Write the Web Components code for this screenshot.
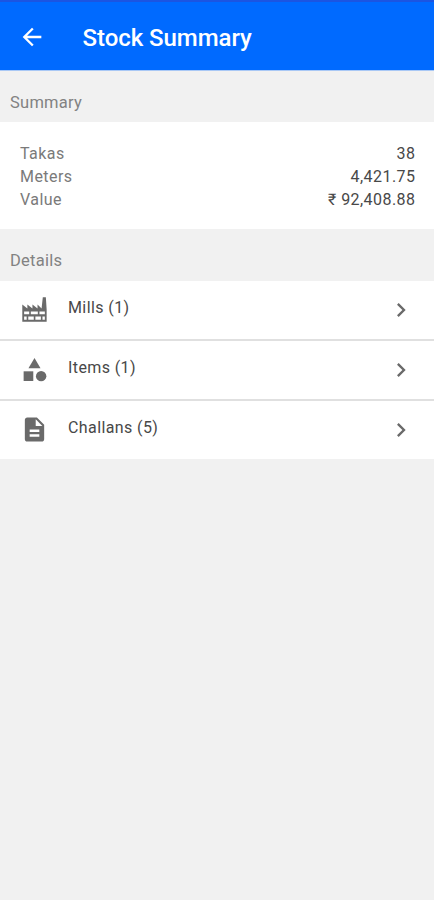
<!DOCTYPE html>
<html lang="en">
<head>
<meta charset="utf-8">
<meta name="viewport" content="width=device-width, initial-scale=1">
<title>Stock Summary</title>
<style>
  html, body {
    margin: 0;
    min-height: 100%;
    background: #f1f1f1;
  }

  body {
    font-family: Roboto, "Liberation Sans", sans-serif;
    font-size: 16px;
    color: #484848;
  }
</style>
</head>
<body>
<stock-page>
  <app-bar slot="header">Stock Summary</app-bar>
  <list-section label="Summary">
    <summary-card>
      <summary-line label="Takas">38</summary-line>
      <summary-line label="Meters">4,421.75</summary-line>
      <summary-line label="Value">₹ 92,408.88</summary-line>
    </summary-card>
  </list-section>
  <list-section label="Details">
    <detail-row icon="factory">Mills (1)</detail-row>
    <detail-row icon="category">Items (1)</detail-row>
    <detail-row icon="document">Challans (5)</detail-row>
  </list-section>
</stock-page>

<script>
// shapes for <app-icon>, all on a 24x24 grid
const icons = {
  back: '<path d="M20 11H7.83l5.59-5.59L12 4l-8 8 8 8 1.41-1.41L7.83 13H20z"/>',
  chevron: '<path d="M8.59 16.59 13.17 12 8.59 7.41 10 6l6 6-6 6z"/>',
  factory: '<path fill-rule="evenodd" transform="translate(1.9 1.9) scale(.84)" d="M0 24V7L5 11V7L10 11V7L15 11V7L19 11L20.2 0H23.2L24 12V24ZM1.8 13.9V16.8H6.8V13.9ZM8.4 13.9V16.8H15.3V13.9ZM16.9 13.9V16.8H22.2V13.9ZM1.8 18.9V22H4.3V18.9ZM5.9 18.9V22H11.3V18.9ZM12.9 18.9V22H18.3V18.9ZM19.9 18.9V22H22.2V18.9Z"/>',
  category: '<path d="M12 2.5 7 11h10z"/><circle cx="17.5" cy="17.5" r="4.3"/><path d="M3 13.5h8v8H3z"/>',
  document: '<path d="M14 2H6c-1.1 0-1.99.9-1.99 2L4 20c0 1.1.89 2 1.99 2H18c1.1 0 2-.9 2-2V8zm2 16H8v-2h8zm0-4H8v-2h8zm-3-5V3.5L18.5 9z"/>',
};

// clone a component's template into a new open shadow root
function attach(host, html) {
  const template = document.createElement('template');
  template.innerHTML = html;
  const root = host.attachShadow({ mode: 'open' });
  root.appendChild(template.content.cloneNode(true));
  return root;
}

class AppIcon extends HTMLElement {
  constructor() {
    super();
    attach(this, `
      <style>
        :host {
          display: block;
          flex: none;
          width: 24px;
          height: 24px;
        }

        svg {
          display: block;
          width: 100%;
          height: 100%;
          fill: currentColor;
        }
      </style>
      <svg viewBox="0 0 24 24" aria-hidden="true"></svg>
    `);
  }

  connectedCallback() {
    this.shadowRoot.querySelector('svg').innerHTML = icons[this.getAttribute('name')] || '';
  }
}

class AppBar extends HTMLElement {
  constructor() {
    super();
    attach(this, `
      <style>
        :host {
          display: flex;
          align-items: center;
          box-sizing: border-box;
          height: 71px;
          padding: 4px 18px 0;
          border-top: 2px solid #1b55e2;
          border-bottom: 1px solid #a9c8f5;
          background: #006aff;
          color: #fff;
        }

        app-icon {
          width: 28px;
          height: 28px;
          margin-bottom: 3px;
        }

        h1 {
          margin: 0 0 0 36.5px;
          font-size: 24px;
          font-weight: 500;
          line-height: 32px;
          letter-spacing: -0.05px;
        }
      </style>
      <app-icon name="back"></app-icon>
      <h1><slot></slot></h1>
    `);
  }
}

class ListSection extends HTMLElement {
  constructor() {
    super();
    attach(this, `
      <style>
        :host {
          display: block;
        }

        h2 {
          margin: 0;
          padding: 0 10px;
          height: 51.4px;
          font-size: 16.5px;
          font-weight: 400;
          line-height: 63px;
          letter-spacing: 0.25px;
          color: #828282;
        }

        .items {
          background: #fff;
        }
      </style>
      <h2></h2>
      <div class="items"><slot></slot></div>
    `);
  }

  connectedCallback() {
    this.shadowRoot.querySelector('h2').textContent = this.getAttribute('label');
  }
}

class SummaryCard extends HTMLElement {
  constructor() {
    super();
    attach(this, `
      <style>
        :host {
          display: flex;
          flex-direction: column;
          box-sizing: border-box;
          height: 107.1px;
          padding: 20px 18.5px 0 20px;
        }
      </style>
      <slot></slot>
    `);
  }
}

class SummaryLine extends HTMLElement {
  constructor() {
    super();
    attach(this, `
      <style>
        :host {
          display: flex;
          justify-content: space-between;
          line-height: 23px;
          letter-spacing: 0.45px;
        }

        .label {
          color: #7a7a7a;
        }
      </style>
      <span class="label"></span>
      <span><slot></slot></span>
    `);
  }

  connectedCallback() {
    this.shadowRoot.querySelector('.label').textContent = this.getAttribute('label');
  }
}

class DetailRow extends HTMLElement {
  constructor() {
    super();
    attach(this, `
      <style>
        :host {
          display: flex;
          align-items: center;
          box-sizing: border-box;
          height: 60px;
          padding: 0 19px 0 20px;
          border-bottom: 2px solid #e0e0e0;
        }

        :host(:last-of-type) {
          height: 58px;
          border-bottom: 0;
        }

        app-icon {
          width: 29px;
          height: 29px;
          color: #6a6a6a;
        }

        .text {
          flex: 1;
          padding: 0 0 3.5px 19px;
          line-height: 24px;
          letter-spacing: 0.4px;
        }

        .chevron {
          width: 28px;
          height: 28px;
        }
      </style>
      <app-icon class="lead"></app-icon>
      <span class="text"><slot></slot></span>
      <app-icon class="chevron" name="chevron"></app-icon>
    `);
  }

  connectedCallback() {
    this.shadowRoot.querySelector('.lead').setAttribute('name', this.getAttribute('icon'));
  }
}

class StockPage extends HTMLElement {
  constructor() {
    super();
    attach(this, `
      <style>
        :host {
          display: flex;
          flex-direction: column;
          min-height: 100vh;
        }
      </style>
      <slot name="header"></slot>
      <slot></slot>
    `);
  }
}

// app-icon reads its name when it connects, so it is registered after
// the rows that set that name
customElements.define('stock-page', StockPage);
customElements.define('app-bar', AppBar);
customElements.define('list-section', ListSection);
customElements.define('summary-card', SummaryCard);
customElements.define('summary-line', SummaryLine);
customElements.define('detail-row', DetailRow);
customElements.define('app-icon', AppIcon);
</script>
</body>
</html>
